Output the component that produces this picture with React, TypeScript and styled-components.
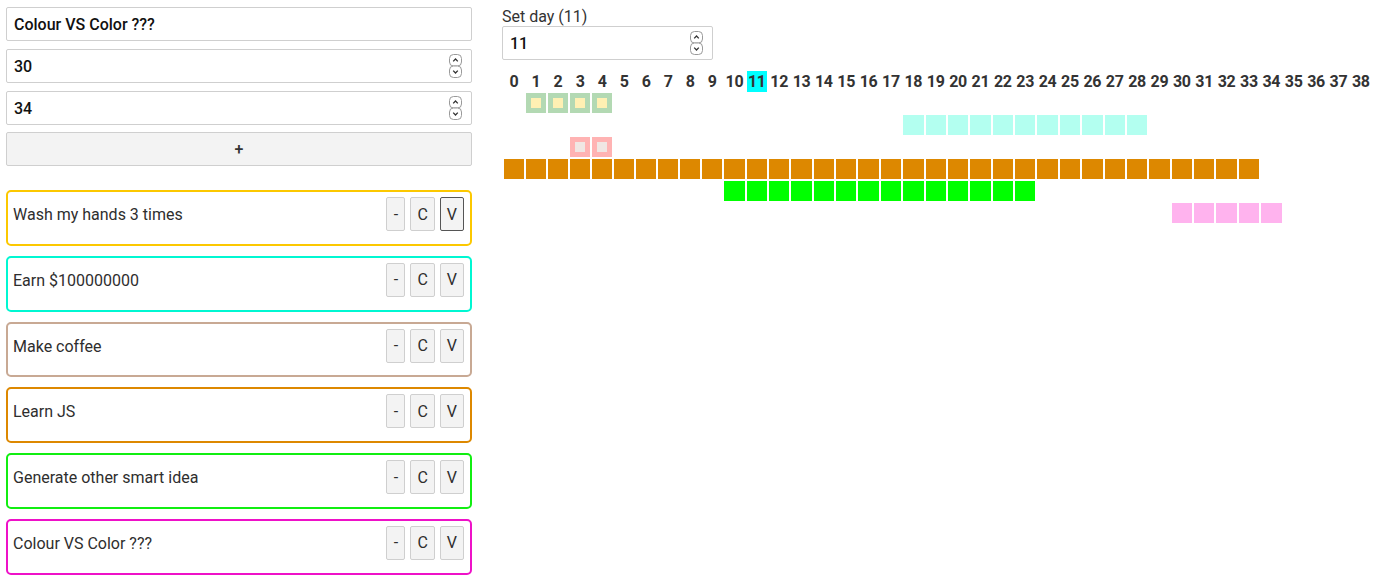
import React from 'react';
import styled, { createGlobalStyle } from 'styled-components';

const GlobalStyle = createGlobalStyle`
  html, body {
    margin: 0;
    padding: 0;
    background: #fff;
  }
  body {
    font-family: Roboto, "Liberation Sans", Arial, sans-serif;
    color: #333;
  }
`;

interface Task {
  title: string;
  border: string;
  focused?: boolean;
}

interface Track {
  days: number[];
  color: string;
  inner?: string;
}

const TASKS: Task[] = [
  { title: 'Wash my hands 3 times', border: '#fcc800', focused: true },
  { title: 'Earn $100000000', border: '#00f7d2' },
  { title: 'Make coffee', border: '#c8a994' },
  { title: 'Learn JS', border: '#dd8800' },
  { title: 'Generate other smart idea', border: '#11ee11' },
  { title: 'Colour VS Color ???', border: '#ee11c8' },
];

const range = (from: number, to: number) => Array.from({ length: to - from + 1 }, (_, i) => from + i);

const TRACKS: Track[] = [
  { days: range(1, 4), color: '#b3d9b3', inner: '#fff0b3' },
  { days: range(18, 28), color: '#b3fff0' },
  { days: range(3, 4), color: '#ffb3b3', inner: '#f0e6e3' },
  { days: range(0, 33), color: '#dd8800' },
  { days: range(10, 23), color: '#00ff00' },
  { days: range(30, 34), color: '#ffb3ee' },
];

const DAYS = range(0, 38);
const TODAY = 11;

const Page = styled.div`
  display: flex;
  gap: 30px;
  padding: 7px 6px 10px 6px;
  align-items: flex-start;
`;

const Sidebar = styled.div`
  width: 466px;
  flex-shrink: 0;
  display: flex;
  flex-direction: column;
`;

const Form = styled.div`
  display: flex;
  flex-direction: column;
  gap: 8px;
`;

const Field = styled.div<{ $width?: string }>`
  display: flex;
  align-items: center;
  box-sizing: border-box;
  width: ${(p) => p.$width || '100%'};
  height: 34px;
  border: 1px solid #cfcfcf;
  border-radius: 2px;
  background: #fff;
  padding: 0 8px 0 7px;
`;

const FieldInput = styled.input`
  flex: 1;
  min-width: 0;
  border: none;
  outline: none;
  padding: 0;
  background: transparent;
  font: 500 16px Roboto, "Liberation Sans", Arial, sans-serif;
  color: #111;
`;

const AddButton = styled.button`
  height: 34px;
  box-sizing: border-box;
  border: 1px solid #cfcfcf;
  border-radius: 2px;
  background: #f3f3f3;
  font: 500 16px Roboto, "Liberation Sans", Arial, sans-serif;
  color: #333;
  margin-top: -1px;
`;

const TaskList = styled.div`
  display: flex;
  flex-direction: column;
  gap: 10px;
  margin-top: 24px;
`;

const Card = styled.div<{ $border: string }>`
  box-sizing: border-box;
  height: 55.8px;
  border: 2px solid ${(p) => p.$border};
  border-radius: 5px;
  display: flex;
  align-items: flex-start;
  padding: 5px 6px 0 5px;
`;

const CardTitle = styled.div`
  flex: 1;
  font-size: 16px;
  line-height: 19px;
  margin-top: 8px;
  color: #2e2e2e;
`;

const Actions = styled.div`
  display: flex;
  gap: 5px;
`;

const ActionButton = styled.button<{ $focused?: boolean }>`
  height: 34px;
  box-sizing: border-box;
  padding: 0 6px;
  border: 1px solid ${(p) => (p.$focused ? '#555' : '#cfcfcf')};
  border-radius: 2px;
  background: #f3f3f3;
  font: 400 16px Roboto, "Liberation Sans", Arial, sans-serif;
  color: #2e2e2e;
  min-width: 19px;
`;

const Board = styled.div`
  flex: 1;
  display: flex;
  flex-direction: column;
`;

const Label = styled.label`
  font-size: 16px;
  line-height: 19px;
  color: #333;
`;

const Grid = styled.div`
  display: flex;
  flex-direction: column;
  gap: 2px;
  margin-top: 11px;
  padding: 0 2px;
`;

/* wider numbers get slightly wider columns, like an auto table */
const Row = styled.div`
  display: grid;
  grid-template-columns: repeat(10, 20fr) repeat(29, 20.35fr);
  column-gap: 2px;
  height: 20px;
`;

const DayNumber = styled.div<{ $today?: boolean }>`
  display: flex;
  align-items: center;
  justify-content: center;
  font: 700 16px Roboto, "Liberation Sans", Arial, sans-serif;
  letter-spacing: -0.3px;
  color: #333;
  white-space: nowrap;
  height: 21px;
  background: ${(p) => (p.$today ? '#00ffff' : 'transparent')};
`;

const Cell = styled.div<{ $color?: string }>`
  height: 20px;
  display: flex;
  align-items: center;
  justify-content: center;
  background: ${(p) => p.$color || 'transparent'};
`;

const CellMark = styled.div<{ $color: string }>`
  width: 10px;
  height: 10px;
  background: ${(p) => p.$color};
`;

const Spinner = () => (
  <svg width="14" height="25" viewBox="0 0 14 25" style={{ flexShrink: 0 }}>
    <rect x="0.5" y="0.5" width="12" height="11.5" rx="4" fill="#fff" stroke="#9a9a9a" />
    <rect x="0.5" y="12" width="12" height="11.5" rx="4" fill="#fff" stroke="#9a9a9a" />
    <path d="M4.2 7.4 L6.5 5 L8.8 7.4" fill="none" stroke="#333" strokeWidth="1.3" />
    <path d="M4.2 16.6 L6.5 19 L8.8 16.6" fill="none" stroke="#333" strokeWidth="1.3" />
  </svg>
);

const NumberField: React.FC<{ value: string; width?: string }> = ({ value, width }) => (
  <Field $width={width}>
    <FieldInput type="text" defaultValue={value} />
    <Spinner />
  </Field>
);

const App: React.FC = () => {
  return (
    <>
      <GlobalStyle />
      <Page>
        <Sidebar>
          <Form>
            <Field>
              <FieldInput type="text" defaultValue="Colour VS Color ???" />
            </Field>
            <NumberField value="30" />
            <NumberField value="34" />
            <AddButton>+</AddButton>
          </Form>
          <TaskList>
            {TASKS.map((task) => (
              <Card key={task.title} $border={task.border}>
                <CardTitle>{task.title}</CardTitle>
                <Actions>
                  <ActionButton>-</ActionButton>
                  <ActionButton>C</ActionButton>
                  <ActionButton $focused={task.focused}>V</ActionButton>
                </Actions>
              </Card>
            ))}
          </TaskList>
        </Sidebar>
        <Board>
          <Label>Set day ({TODAY})</Label>
          <NumberField value={String(TODAY)} width="211px" />
          <Grid>
            <Row>
              {DAYS.map((d) => (
                <DayNumber key={d} $today={d === TODAY}>
                  {d}
                </DayNumber>
              ))}
            </Row>
            {TRACKS.map((track, i) => (
              <Row key={i}>
                {DAYS.map((d) => {
                  const active = track.days.includes(d);
                  return (
                    <Cell key={d} $color={active ? track.color : undefined}>
                      {active && track.inner && <CellMark $color={track.inner} />}
                    </Cell>
                  );
                })}
              </Row>
            ))}
          </Grid>
        </Board>
      </Page>
    </>
  );
};

export default App;
